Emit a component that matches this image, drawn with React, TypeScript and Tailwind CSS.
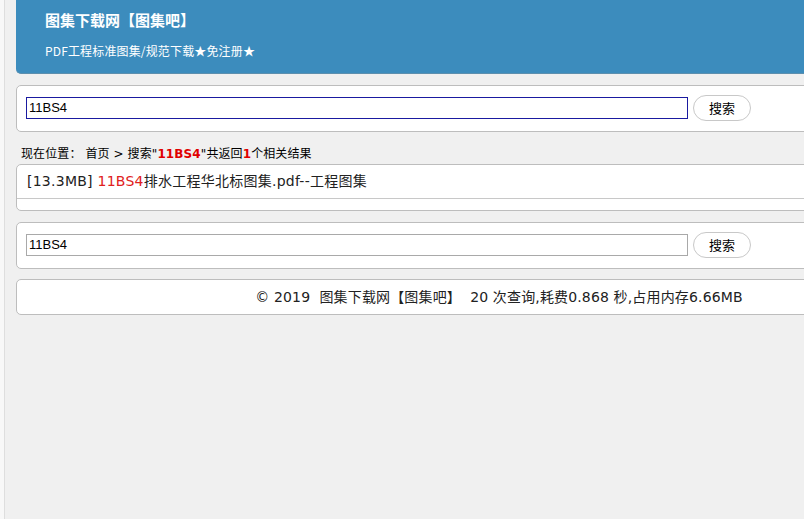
import React from "react";

const cjk = { fontFamily: '"Noto Sans CJK SC", "Liberation Sans", sans-serif' };
const latinCjk = { fontFamily: '"DejaVu Sans", "Noto Sans CJK SC", sans-serif' };

function SearchBox({ focused }: { focused?: boolean }) {
  return (
    <div className="h-[47px] bg-white border border-[#bdbdbd] rounded-[5px] flex items-start pl-[9px] pt-[11px]">
      <div
        className={
          "w-[662px] h-[22px] bg-white flex items-center pl-[2px] text-[13px] text-black " +
          (focused ? "border border-[#1a1aa0]" : "border border-[#a9a9a9]")
        }
        style={{ fontFamily: '"Liberation Sans", Arial, sans-serif' }}
      >
        11BS4
      </div>
      <button
        className="ml-[5px] mt-[-2px] w-[58px] h-[26px] rounded-full border border-[#c8c8c8] bg-white text-[13px] text-black flex items-center justify-center"
        style={cjk}
      >
        搜索
      </button>
    </div>
  );
}

export default function App() {
  return (
    <div className="w-screen h-screen overflow-hidden bg-[#f0f0f0] flex">
      <div className="w-[5px] h-full bg-[#f8f8f8] border-r border-[#dedede] shrink-0" />
      <div className="ml-[11px] w-[966px] shrink-0">
        <div className="h-[74px] bg-[#3c8cbd] rounded-b-[5px] border-b border-[#5d8fae] pl-[29px] pt-[10px] text-white">
          <div className="text-[15px] font-bold leading-[20px]" style={cjk}>
            图集下载网【图集吧】
          </div>
          <div className="mt-[13px] text-[12px] leading-[16px] tracking-[0.15px]" style={cjk}>
            PDF工程标准图集/规范下载★免注册★
          </div>
        </div>
        <div className="mt-[11px]">
          <SearchBox focused />
        </div>
        <div className="mt-[14px] pl-[5px] h-[16px] leading-[16px] text-[12px] text-black whitespace-nowrap tracking-[0.1px]" style={latinCjk}>
          现在位置：&nbsp;首页&nbsp;&gt;&nbsp;搜索"<span className="text-[#e00000] font-bold">11BS4</span>"共返回
          <span className="text-[#e00000] font-bold">1</span>个相关结果
        </div>
        <div className="mt-[2px] h-[47px] bg-white border border-[#bdbdbd] rounded-[5px]">
          <div
            className="h-[34px] border-b border-[#c8c8c8] pl-[10px] flex items-center text-[14px] text-[#222] whitespace-nowrap tracking-[0.25px]"
            style={latinCjk}
          >
            [13.3MB]&nbsp;<span className="text-[#e02020]">11BS4</span>排水工程华北标图集.pdf--工程图集
          </div>
        </div>
        <div className="mt-[11px]">
          <SearchBox />
        </div>
        <div
          className="mt-[10px] h-[36px] bg-white border border-[#bdbdbd] rounded-[5px] flex items-center justify-center text-[14px] text-[#222] whitespace-nowrap tracking-[0.15px]"
          style={latinCjk}
        >
          © 2019&nbsp; 图集下载网【图集吧】&nbsp; 20 次查询,耗费0.868 秒,占用内存6.66MB
        </div>
      </div>
    </div>
  );
}
